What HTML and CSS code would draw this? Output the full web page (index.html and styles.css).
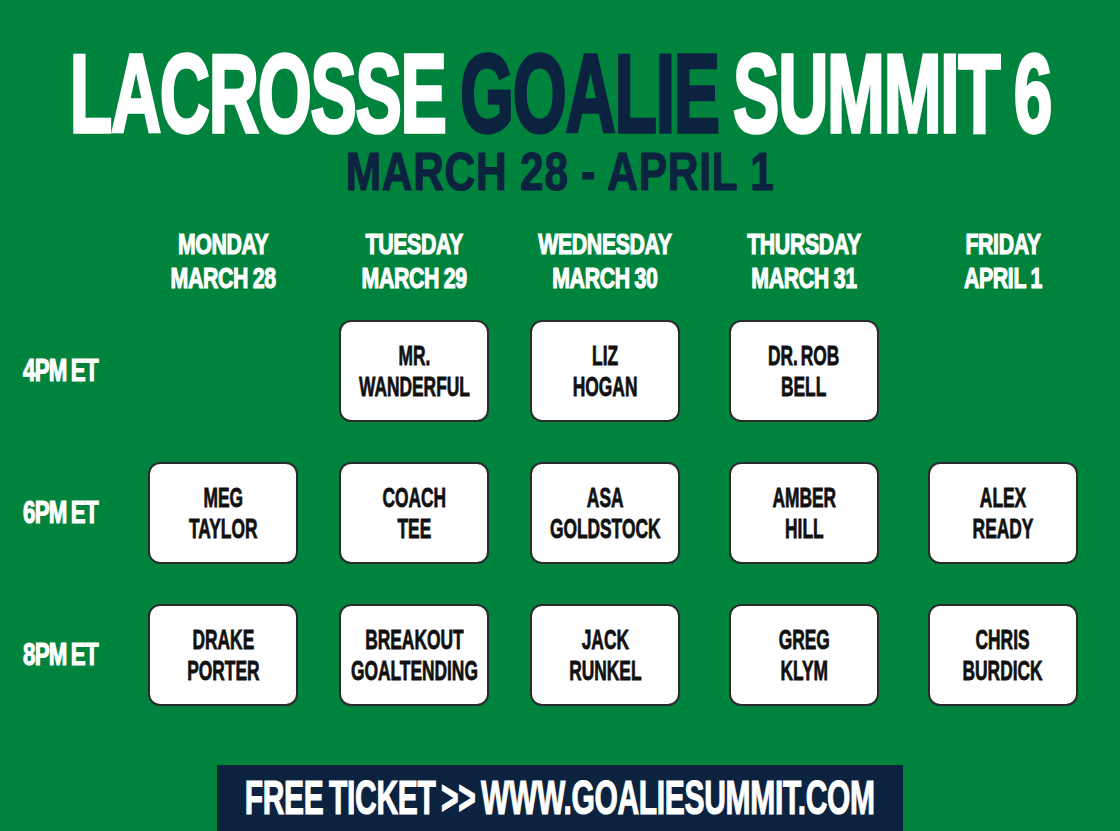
FILE: index.html
```html
<!DOCTYPE html>
<html lang="en">
<head>
<meta charset="utf-8">
<title>Lacrosse Goalie Summit 6</title>
<link rel="stylesheet" href="styles.css">
</head>
<body>
<div class="page">
  <header class="masthead">
    <h1 class="title"><span class="title-text">LACROSSE <span class="navy">GOALIE</span> SUMMIT 6</span></h1>
    <p class="dates"><span class="dates-text">MARCH 28 - APRIL 1</span></p>
  </header>

  <div class="cols days">
    <div></div>
    <div class="day"><span class="day-text">MONDAY<br>MARCH 28</span></div>
    <div class="day"><span class="day-text">TUESDAY<br>MARCH 29</span></div>
    <div class="day"><span class="day-text">WEDNESDAY<br>MARCH 30</span></div>
    <div class="day"><span class="day-text">THURSDAY<br>MARCH 31</span></div>
    <div class="day"><span class="day-text">FRIDAY<br>APRIL 1</span></div>
  </div>

  <div class="cols schedule">
    <div class="time"><span class="time-text">4PM ET</span></div>
    <div class="slot"></div>
    <div class="slot"><div class="card"><span class="card-text">MR.<br>WANDERFUL</span></div></div>
    <div class="slot"><div class="card"><span class="card-text">LIZ<br>HOGAN</span></div></div>
    <div class="slot"><div class="card"><span class="card-text">DR. ROB<br>BELL</span></div></div>
    <div class="slot"></div>

    <div class="time"><span class="time-text">6PM ET</span></div>
    <div class="slot"><div class="card"><span class="card-text">MEG<br>TAYLOR</span></div></div>
    <div class="slot"><div class="card"><span class="card-text">COACH<br>TEE</span></div></div>
    <div class="slot"><div class="card"><span class="card-text">ASA<br>GOLDSTOCK</span></div></div>
    <div class="slot"><div class="card"><span class="card-text">AMBER<br>HILL</span></div></div>
    <div class="slot"><div class="card"><span class="card-text">ALEX<br>READY</span></div></div>

    <div class="time"><span class="time-text">8PM ET</span></div>
    <div class="slot"><div class="card"><span class="card-text">DRAKE<br>PORTER</span></div></div>
    <div class="slot"><div class="card"><span class="card-text">BREAKOUT<br>GOALTENDING</span></div></div>
    <div class="slot"><div class="card"><span class="card-text">JACK<br>RUNKEL</span></div></div>
    <div class="slot"><div class="card"><span class="card-text">GREG<br>KLYM</span></div></div>
    <div class="slot"><div class="card"><span class="card-text">CHRIS<br>BURDICK</span></div></div>
  </div>

  <footer class="cta">
    <div class="cta-bar"><span class="cta-text">FREE TICKET &gt;&gt; WWW.GOALIESUMMIT.COM</span></div>
  </footer>
</div>
</body>
</html>
```

FILE: styles.css
```css
html, body {
  margin: 0;
  padding: 0;
}
body {
  width: 1120px;
  height: 831px;
  overflow: hidden;
  background: #00843d;
  font-family: "Liberation Sans", Arial, sans-serif;
  font-weight: 700;
  color: #ffffff;
}
.page {
  padding-top: 44px;
}
.masthead {
  display: flex;
  flex-direction: column;
  align-items: center;
}
.title {
  margin: 0;
  display: flex;
  justify-content: center;
  width: 100%;
  font-size: 112px;
  line-height: 100px;
  font-weight: 700;
  white-space: nowrap;
}
.title-text {
  display: inline-block;
  transform: scaleX(0.62);
  letter-spacing: -2px;
  word-spacing: -6px;
  -webkit-text-stroke: 3.5px #ffffff;
}
.title-text .navy {
  color: #0c2340;
  -webkit-text-stroke: 3.5px #0c2340;
}
.dates {
  margin: 1px 0 0;
  display: flex;
  justify-content: center;
  width: 100%;
  font-size: 53px;
  line-height: 53px;
  color: #0c2340;
  white-space: nowrap;
}
.dates-text {
  display: inline-block;
  transform: scaleX(0.8);
  letter-spacing: 1px;
  -webkit-text-stroke: 1.2px #0c2340;
}

.cols {
  display: grid;
  grid-template-columns: 108px 190px 192px 190px 208px 190px;
  padding-left: 20px;
}
.days {
  margin-top: 29px;
}
.day {
  display: flex;
  justify-content: center;
  text-align: center;
  font-size: 30px;
  line-height: 33.5px;
  white-space: nowrap;
}
.day-text {
  display: inline-block;
  transform: scaleX(0.71);
  letter-spacing: -0.5px;
  word-spacing: -1px;
  -webkit-text-stroke: 1.2px #ffffff;
}

.schedule {
  margin-top: 26px;
  grid-auto-rows: 102px;
  row-gap: 40px;
}
.time {
  display: flex;
  align-items: center;
  padding-left: 3px;
  font-size: 31px;
  white-space: nowrap;
}
.time-text {
  display: inline-block;
  transform: scaleX(0.72);
  transform-origin: left center;
  letter-spacing: -1px;
  word-spacing: -2px;
  -webkit-text-stroke: 1.2px #ffffff;
}
.slot {
  display: flex;
  justify-content: center;
}
.card {
  box-sizing: border-box;
  width: 150px;
  height: 102px;
  background: #ffffff;
  border: 2.5px solid #2b2b2b;
  border-radius: 12px;
  display: flex;
  align-items: center;
  justify-content: center;
  text-align: center;
  color: #111111;
  font-size: 28px;
  line-height: 31.3px;
  white-space: nowrap;
}
.card-text {
  display: inline-block;
  transform: scaleX(0.62);
  word-spacing: -3px;
  -webkit-text-stroke: 0.8px #111111;
}

.cta {
  margin-top: 59px;
  display: flex;
  justify-content: center;
}
.cta-bar {
  width: 686px;
  height: 70px;
  background: #0c2340;
  display: flex;
  justify-content: center;
  font-size: 49px;
  line-height: 64px;
  white-space: nowrap;
}
.cta-text {
  display: inline-block;
  transform: scaleX(0.612);
  letter-spacing: -0.5px;
  word-spacing: -4px;
  -webkit-text-stroke: 1.2px #ffffff;
}
```
